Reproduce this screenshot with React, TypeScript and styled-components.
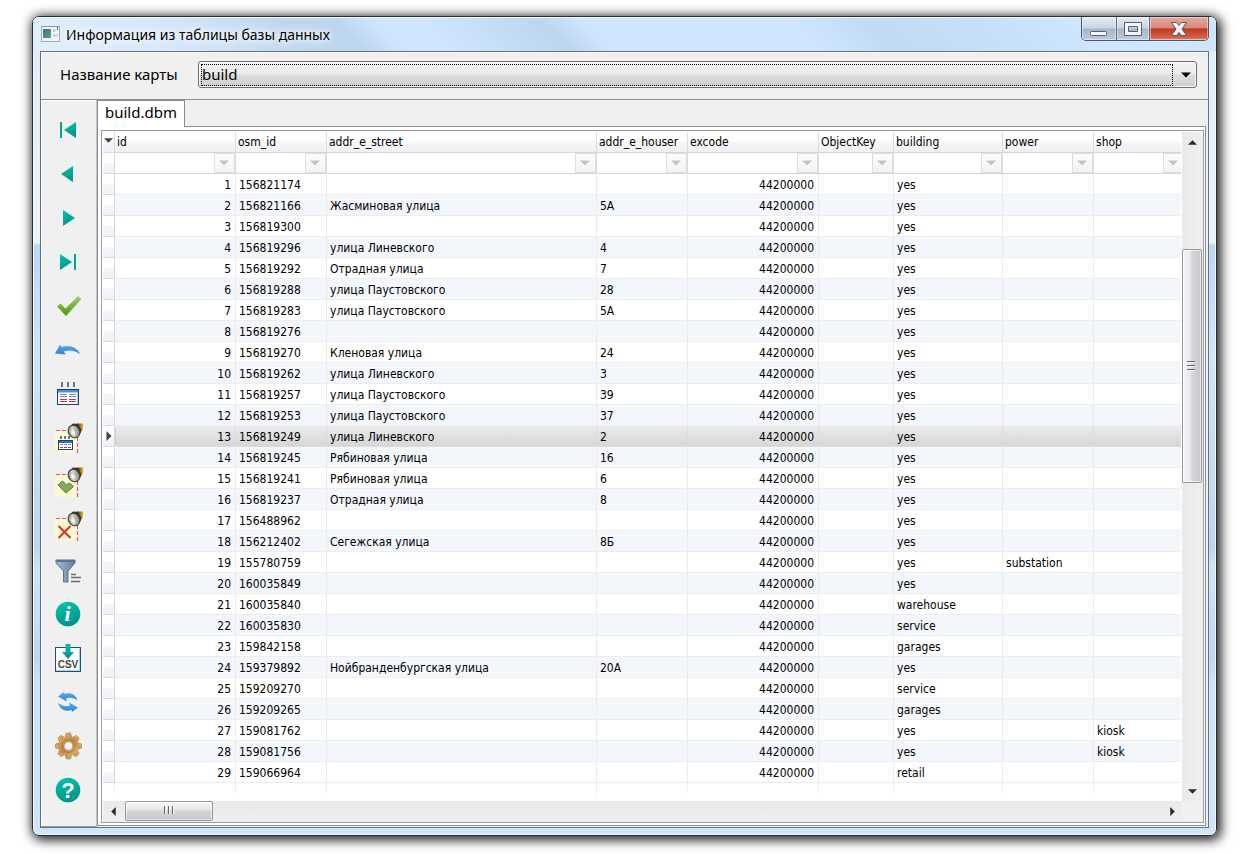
import React from 'react';
import styled, { createGlobalStyle, css } from 'styled-components';

const tableFont = "'DejaVu Sans Condensed', Tahoma, 'DejaVu Sans', sans-serif";
const uiFont = "'Noto Sans', 'Segoe UI', sans-serif";

const GlobalStyle = createGlobalStyle`
  *, *::before, *::after { box-sizing: border-box; }
  body { margin: 0; background: #fff; color: #000; font-family: ${uiFont}; }
  button { margin: 0; padding: 0; border: 0; background: none; font: inherit; color: inherit; cursor: default; }
`;

const Desktop = styled.div`
  min-height: 100vh;
  padding: 16px 32px 18px;
  display: flex;
`;

const Window = styled.main`
  flex: 1;
  min-width: 0;
  display: flex;
  flex-direction: column;
  padding: 0 7px 7px;
  border: 1px solid #252e38;
  border-radius: 7px;
  background: linear-gradient(
    to bottom,
    #dcecfc 0, #eaf4fd 226px, #bcd8f4 228px, #cfe5fe 340px,
    #bdd5ee 530px, #cde4fd 550px, #bfd8f2 640px, #cce4fd 670px, #cfe5fe 100%
  );
  box-shadow: inset 0 0 0 1px #f4faff, 3px 3px 12px 1px rgba(0, 0, 0, 0.75), 0 0 12px rgba(0, 0, 0, 0.5);
`;

const TitleBar = styled.header`
  height: 34px;
  margin: 0 -7px;
  padding: 0 7px;
  display: flex;
  align-items: flex-start;
  border-radius: 6px 6px 0 0;
  box-shadow: inset 0 1px 0 #f4faff;
  background: linear-gradient(
    45deg,
    #e2f0fd 0, #d3e6fa 120px, #bfd6ef 195px, #bdd5ee 235px, #cfe5fe 262px,
    #cfe5fe 300px, #bdd5ee 380px, #cfe5fe 408px, #cfe5fe 560px,
    #c1dbf5 610px, #c6e0f9 690px, #cde6fe 750px, #cfe5fe 100%
  );
`;

const Caption = styled.h1`
  flex: 1;
  min-width: 0;
  margin: 0;
  height: 34px;
  display: flex;
  align-items: center;
  gap: 5px;
  padding-left: 1px;
  font-size: 14px;
  font-weight: 400;
  white-space: nowrap;
  text-shadow: 0 0 6px #fff, 0 0 10px #fff, 0 0 14px #fff;
`;

const WindowButtons = styled.div`
  display: flex;
  height: 24px;
  border: 1px solid #4c5868;
  border-top: 0;
  border-radius: 0 0 5px 5px;
  overflow: hidden;
`;

const WindowButton = styled.button<{ $width: number; $close?: boolean }>`
  width: ${(p) => p.$width}px;
  display: flex;
  align-items: center;
  justify-content: center;
  box-shadow: inset 0 0 0 1px rgba(255, 255, 255, 0.45);
  background: linear-gradient(#e4ebf2, #c9d5e3 48%, #a4b6cb 52%, #bccbe2);
  & + & { border-left: 1px solid #5d6a7c; }
  ${(p) => p.$close && css`
    background: linear-gradient(#e6a79c, #d98a7c 46%, #bd3a22 52%, #d8624a 90%, #e09080);
  `}
`;

const Client = styled.div`
  flex: 1;
  display: flex;
  flex-direction: column;
  border: 1px solid #69717e;
  background: #f0f0f0;
  box-shadow: inset 1px 1px 0 #fff;
`;

const MapPanel = styled.div`
  display: flex;
  align-items: center;
  height: 48px;
  padding: 0 11px 2px 19px;
  border-bottom: 1px solid #8e8e8e;
  font-size: 15px;
`;

const MapLabel = styled.label`
  width: 138px;
  flex: none;
  padding-bottom: 2px;
`;

const Combo = styled.div`
  flex: 1;
  height: 27px;
  display: flex;
  align-items: center;
  padding: 2px;
  border: 1px solid #707070;
  border-radius: 3px;
  background: linear-gradient(#f2f2f2, #ebebeb 49%, #dddddd 51%, #cfcfcf);
  box-shadow: inset 0 0 0 1px #f8f8f8;
`;

const ComboSelect = styled.select`
  appearance: none;
  flex: 1;
  min-width: 0;
  height: 22px;
  margin: 0;
  padding: 0 0 2px;
  border: 1px dotted #000;
  border-radius: 0;
  outline: 0;
  background: transparent;
  color: #000;
  font: 15px/18px ${uiFont};
`;

const ComboArrow = styled.span`
  width: 21px;
  display: flex;
  justify-content: center;
  padding-left: 5px;
`;

const Body = styled.div`
  flex: 1;
  display: flex;
  min-height: 0;
`;

const Sidebar = styled.nav`
  width: 56px;
  flex: none;
  padding: 8px 2px 0 0;
  display: flex;
  flex-direction: column;
  align-items: center;
  border-right: 1px solid #c4c4c8;
  border-bottom: 1px solid #9a9a9a;
  box-shadow: inset 1px 1px 0 #fff;
`;

const ToolButton = styled.button`
  width: 44px;
  height: 44px;
  display: flex;
  align-items: center;
  justify-content: center;
  svg { display: block; }
`;

const Main = styled.section`
  flex: 1;
  min-width: 0;
  display: flex;
  flex-direction: column;
  padding: 0 2px 1px 0;
`;

const TabStrip = styled.div`
  height: 26px;
  display: flex;
`;

const Tab = styled.button`
  height: 27px;
  padding: 0 7px 4px;
  border: 1px solid #8b8b95;
  border-bottom: 0;
  background: #fff;
  font-size: 15px;
  line-height: 22px;
  z-index: 1;
`;

const TabPage = styled.div`
  flex: 1;
  display: flex;
  padding: 3px 1px 2px 3px;
  border: 1px solid #8b8b95;
  background: #fff;
`;

const GridFrame = styled.div`
  flex: 1;
  min-width: 0;
  display: grid;
  grid-template-columns: minmax(0, 1fr) 21px;
  grid-template-rows: 1fr 21px;
  padding: 1px 0 0 1px;
  border: 1px solid #9a9aa2;
  background: #fff;
`;

const Viewport = styled.div`
  display: flex;
  flex-direction: column;
  overflow: hidden;
  margin-right: 1px;
`;

const DataTable = styled.table`
  width: 1082px;
  table-layout: fixed;
  border-collapse: separate;
  border-spacing: 0;
  font: 12px/18px ${tableFont};
`;

const headFill = 'linear-gradient(#ffffff 0, #ffffff 45%, #f6f7f9 50%, #eef0f3 100%)';

const HeadCell = styled.th`
  height: 21px;
  padding: 0 0 0 2px;
  overflow: hidden;
  text-align: left;
  font-weight: 400;
  white-space: nowrap;
  border-right: 1px solid #dcdcdc;
  border-bottom: 1px solid #d6d6d8;
  background: ${headFill};
`;

const MarkerCell = styled.th`
  height: 21px;
  padding: 0;
  border-right: 1px solid #d8d8da;
  border-bottom: 1px solid #dadadc;
  background: ${headFill};
  svg { display: block; margin: 0 auto; }
  thead & { padding-bottom: 4px; }
`;

const FilterCell = styled.td`
  height: 21px;
  padding: 0;
  border-right: 1px solid #dcdcdc;
  border-bottom: 1px solid #d6d6d8;
`;

const FilterBox = styled.div`
  height: 20px;
  display: flex;
`;

const FilterInput = styled.input`
  flex: 1;
  min-width: 0;
  margin: 0;
  padding: 0 2px;
  border: 0;
  outline: 0;
  background: transparent;
  font: 12px/18px ${tableFont};
`;

const FilterButton = styled.button`
  width: 21px;
  display: flex;
  align-items: center;
  justify-content: center;
  padding-right: 1px;
  border: 1px solid #dedede;
  background: linear-gradient(#fdfdfd, #f3f3f3);
`;

const Row = styled.tr<{ $even: boolean; $current: boolean }>`
  background: ${(p) => (p.$even ? '#f3f7fc' : '#ffffff')};
  ${(p) => p.$current && css`
    td { background: linear-gradient(#ececec, #d6d6d6); border-color: #dcdcdc; }
    td:nth-child(2) { border-left: 1px solid #cfcfcf; border-radius: 3px 0 0 3px; }
  `}
`;

const Cell = styled.td<{ $right?: boolean }>`
  height: 21px;
  padding: 2px 4px 0 3px;
  overflow: hidden;
  white-space: nowrap;
  text-align: ${(p) => (p.$right ? 'right' : 'left')};
  border-right: 1px solid #ebebeb;
  border-bottom: 1px solid #ededed;
`;

const FadeCell = styled.td`
  height: 15px;
  padding: 0;
  background: linear-gradient(#e6e6e6, #ffffff) right / 1px 100% no-repeat;
`;

const VBar = styled.div`
  display: flex;
  flex-direction: column;
  background: linear-gradient(to right, #e9e9e9, #f0f0f0);
`;

const HBar = styled.div`
  display: flex;
  background: linear-gradient(#e9e9e9, #f0f0f0);
`;

const ArrowButton = styled.button`
  width: 20px;
  height: 20px;
  flex: none;
  display: flex;
  align-items: center;
  justify-content: center;
`;

const VThumb = styled.div`
  flex: 231 1 0;
  width: 20px;
  display: flex;
  align-items: center;
  justify-content: center;
  padding: 0 2px 2px 0;
  border: 1px solid #979797;
  border-radius: 2px;
  background: linear-gradient(to right, #f5f5f5, #e9e9eb 40%, #d9dadc 45%, #c4c5c9);
  box-shadow: inset 0 0 0 1px rgba(255, 255, 255, 0.6);
`;

const HThumb = styled.div`
  flex: 86 1 0;
  height: 20px;
  display: flex;
  align-items: center;
  justify-content: center;
  padding-bottom: 2px;
  border: 1px solid #979797;
  border-radius: 2px;
  background: linear-gradient(#f5f5f5, #e9e9eb 40%, #d9dadc 45%, #c4c5c9);
  box-shadow: inset 0 0 0 1px rgba(255, 255, 255, 0.6);
`;

const Gap = styled.span<{ $grow: number }>`
  flex: ${(p) => p.$grow} 1 0;
`;

const Corner = styled.div`
  background: #f0f0f0;
`;

type Dir = 'up' | 'down' | 'left' | 'right';
const arrowPoints: Record<Dir, string> = {
  up: '0,6 4,2 8,6',
  down: '0,2 8,2 4,6',
  left: '6,0 6,8 2,4',
  right: '2,0 2,8 6,4',
};

const Arrow = ({ dir, color = '#2a2a2a', size = 9 }: { dir: Dir; color?: string; size?: number }) => (
  <svg width={size} height={size} viewBox="0 0 8 8" aria-hidden="true">
    <polygon points={arrowPoints[dir]} fill={color} />
  </svg>
);

const Icon = ({ children }: { children: React.ReactNode }) => (
  <svg width="32" height="32" viewBox="-2 -2 32 32" aria-hidden="true">{children}</svg>
);

const HiddenSvg = styled.svg`
  position: absolute;
`;

const Defs = () => (
  <HiddenSvg width="0" height="0" aria-hidden="true">
    <defs>
      <linearGradient id="teal" x1="0" y1="0" x2="0.3" y2="1">
        <stop offset="0" stopColor="#06c4ad" /><stop offset="1" stopColor="#00968b" />
      </linearGradient>
      <linearGradient id="green" x1="0" y1="0" x2="0" y2="1">
        <stop offset="0" stopColor="#a9cf7a" /><stop offset="1" stopColor="#4c9400" />
      </linearGradient>
      <linearGradient id="blue" x1="0" y1="0" x2="0" y2="1">
        <stop offset="0" stopColor="#5aaef0" /><stop offset="1" stopColor="#2f7fd8" />
      </linearGradient>
      <linearGradient id="steel" x1="0" y1="0" x2="1" y2="0">
        <stop offset="0" stopColor="#a9bad2" /><stop offset="1" stopColor="#647ba0" />
      </linearGradient>
      <linearGradient id="gold" x1="0" y1="0" x2="1" y2="1">
        <stop offset="0" stopColor="#e9bd7c" /><stop offset="1" stopColor="#b87f3c" />
      </linearGradient>
      <linearGradient id="goldRing" gradientUnits="userSpaceOnUse" x1="6" y1="5" x2="23" y2="23">
        <stop offset="0" stopColor="#d9a661" /><stop offset="0.5" stopColor="#c08a46" /><stop offset="1" stopColor="#e0b070" />
      </linearGradient>
      <linearGradient id="torch" x1="0" y1="0" x2="1" y2="0">
        <stop offset="0" stopColor="#4a4a48" /><stop offset="0.4" stopColor="#3a3226" /><stop offset="1" stopColor="#f5b020" />
      </linearGradient>
      <linearGradient id="lens" x1="0" y1="0" x2="1" y2="0.6">
        <stop offset="0" stopColor="#77776f" /><stop offset="0.5" stopColor="#d8d8d2" /><stop offset="1" stopColor="#8a8a84" />
      </linearGradient>
      <linearGradient id="screen" x1="0" y1="0" x2="1" y2="1">
        <stop offset="0" stopColor="#3d6aa8" /><stop offset="1" stopColor="#5cab74" />
      </linearGradient>
    </defs>
  </HiddenSvg>
);

const SearchSheet = ({ children }: { children: React.ReactNode }) => (
  <Icon>
    <rect x="1" y="6" width="22" height="23" fill="#fbf9cf" />
    <path d="M2 6.500H15M23.500 13V29" stroke="#dc5580" strokeWidth="1.200" strokeDasharray="4 2" fill="none" />
    {children}
    <path d="M23 -0.500H29V5L26 10L19 1Z" fill="url(#torch)" />
    <path d="M15 3L19 -0.500L24 0L27.500 6L25 12Z" fill="#333331" />
    <ellipse cx="20" cy="7.500" rx="5.500" ry="6.500" transform="rotate(-35 20 7.5)" fill="url(#lens)" stroke="#454541" strokeWidth="1.200" />
    <ellipse cx="19" cy="8.500" rx="2" ry="2.500" transform="rotate(-35 19 8.5)" fill="#f0f0ea" />
  </Icon>
);

const gearTeeth = [0, 45, 90, 135, 180, 225, 270, 315];

const tools: { label: string; icon: React.ReactNode }[] = [
  { label: 'Первая запись', icon: <Icon><rect x="6" y="6" width="2" height="16" fill="#00a596" /><polygon points="22,6 22,22 10,14" fill="url(#teal)" /></Icon> },
  { label: 'Предыдущая запись', icon: <Icon><polygon points="19,6 19,22 7,14" fill="url(#teal)" /></Icon> },
  { label: 'Следующая запись', icon: <Icon><polygon points="9,6 9,22 21,14" fill="url(#teal)" /></Icon> },
  { label: 'Последняя запись', icon: <Icon><polygon points="6,6 6,22 18,14" fill="url(#teal)" /><rect x="20" y="6" width="2" height="16" fill="#00a596" /></Icon> },
  { label: 'Применить', icon: <Icon><path d="M3 14.500L6.500 11.500L11.500 16.500L24 4L27.500 7L12 24Z" fill="url(#green)" /></Icon> },
  { label: 'Отменить', icon: <Icon><path d="M1 17.500L6 8.500L7.500 11C15 8.500 23 11 26 18C20.500 14.500 15 13.800 10 15.500L11.500 18.500Z" fill="url(#blue)" /></Icon> },
  {
    label: 'Таблица',
    icon: (
      <Icon>
        <path d="M8 2V7M14 2V7M20 2V7" stroke="#66769a" strokeWidth="2" />
        <rect x="3.500" y="9.500" width="21" height="15" fill="#fff" stroke="#1d3f77" />
        <rect x="4" y="10" width="20" height="2.500" fill="#4a90e2" />
        <path d="M23.500 12V24" stroke="#9fd4f5" />
        <path d="M6 14.500H13M15 14.500H22M6 16.500H13M15 16.500H22" stroke="#7b88a6" />
        <path d="M6 19.500H13M15 19.500H22M6 21.500H13M15 21.500H22" stroke="#d8244c" />
      </Icon>
    ),
  },
  {
    label: 'Поиск в таблице',
    icon: (
      <SearchSheet>
        <path d="M7 12V15M11 12V15M15 12V15" stroke="#66769a" strokeWidth="2" />
        <rect x="4.500" y="16.500" width="14" height="9" fill="#fff" stroke="#1d3f77" />
        <rect x="5" y="17" width="13" height="2" fill="#2f6fc4" />
        <path d="M6 20.500H17" stroke="#7b88a6" strokeDasharray="3 1" />
        <path d="M6 23.500H17" stroke="#d8244c" strokeDasharray="3 1" />
      </SearchSheet>
    ),
  },
  { label: 'Поиск объекта', icon: <SearchSheet><path d="M4 17L8.500 13L12.500 17L15.500 15L19.500 18.500L12 25Z" fill="#86ab5c" stroke="#56803a" /></SearchSheet> },
  { label: 'Сбросить выделение', icon: <SearchSheet><path d="M4.500 14L16.500 26M16.500 14L4.500 26" stroke="#d92b2b" strokeWidth="2" /></SearchSheet> },
  {
    label: 'Фильтр',
    icon: (
      <Icon>
        <path d="M2 4H21V7L14 15V26H9.500V15L2 7Z" fill="url(#steel)" stroke="#5b7196" />
        <path d="M2.500 5H20.500" stroke="#5b7196" strokeWidth="2" />
        <path d="M17 18.500H22M17 21.500H27M17 25.500H26" stroke="#6c6c6c" strokeWidth="1.500" />
      </Icon>
    ),
  },
  {
    label: 'Информация',
    icon: (
      <Icon>
        <circle cx="14" cy="14" r="12.300" fill="url(#teal)" />
        <text x="13.500" y="21" textAnchor="middle" fill="#fff" fontFamily="'Liberation Serif', serif" fontStyle="italic" fontWeight="700" fontSize="22">i</text>
      </Icon>
    ),
  },
  {
    label: 'Экспорт в CSV',
    icon: (
      <Icon>
        <rect x="1.500" y="3.500" width="25" height="24" fill="#fff" stroke="#2b4a7c" />
        <path d="M25.500 4.500V26.500H2" stroke="#8fdcf0" fill="none" />
        <path d="M11.500 0H16.500V8H20L14 15L8 8H11.500Z" fill="url(#teal)" />
        <text x="14" y="24" textAnchor="middle" fill="#444" fontFamily="'Liberation Sans', sans-serif" fontWeight="700" fontSize="10">CSV</text>
      </Icon>
    ),
  },
  {
    label: 'Обновить',
    icon: (
      <Icon>
        <path d="M4 8.500L10 4L10.500 6C17 4 21.500 6.500 23.500 12.500C20 10 16 9 12 10.500L13 13.500Z" fill="url(#blue)" />
        <path d="M24 19.500L18 24L17.500 22C11 24 6 21.500 4 15C8 18 12 19 16 17.500L15 14.500Z" fill="url(#blue)" />
      </Icon>
    ),
  },
  {
    label: 'Настройки',
    icon: (
      <Icon>
        {gearTeeth.map((a) => (
          <path key={a} d="M11 6L12.500 1H16.500L18 6Z" transform={`rotate(${a} 14.5 14)`} fill="url(#gold)" stroke="#a97435" strokeWidth="0.600" />
        ))}
        <circle cx="14.500" cy="14" r="7.200" fill="none" stroke="url(#goldRing)" strokeWidth="5.500" />
        <circle cx="14.500" cy="14" r="6.500" fill="none" stroke="#a87236" strokeWidth="0.800" />
        <circle cx="14.500" cy="14" r="4.500" fill="#f4f4f4" stroke="#a97435" strokeWidth="0.800" />
      </Icon>
    ),
  },
  {
    label: 'Справка',
    icon: (
      <Icon>
        <circle cx="14" cy="14" r="12.300" fill="url(#teal)" />
        <text x="14" y="22" textAnchor="middle" fill="#fff" fontFamily="'Liberation Sans', sans-serif" fontWeight="700" fontSize="22">?</text>
      </Icon>
    ),
  },
];

const columns = [
  { name: 'id', width: 121 },
  { name: 'osm_id', width: 91 },
  { name: 'addr_e_street', width: 270 },
  { name: 'addr_e_houser', width: 91 },
  { name: 'excode', width: 131 },
  { name: 'ObjectKey', width: 75 },
  { name: 'building', width: 109 },
  { name: 'power', width: 91 },
  { name: 'shop', width: 91 },
];

type Rec = [osm: string, street?: string, house?: string, building?: string, power?: string, shop?: string];
const records: Rec[] = [
  ['156821174'],
  ['156821166', 'Жасминовая улица', '5А'],
  ['156819300'],
  ['156819296', 'улица Линевского', '4'],
  ['156819292', 'Отрадная улица', '7'],
  ['156819288', 'улица Паустовского', '28'],
  ['156819283', 'улица Паустовского', '5А'],
  ['156819276'],
  ['156819270', 'Кленовая улица', '24'],
  ['156819262', 'улица Линевского', '3'],
  ['156819257', 'улица Паустовского', '39'],
  ['156819253', 'улица Паустовского', '37'],
  ['156819249', 'улица Линевского', '2'],
  ['156819245', 'Рябиновая улица', '16'],
  ['156819241', 'Рябиновая улица', '6'],
  ['156819237', 'Отрадная улица', '8'],
  ['156488962'],
  ['156212402', 'Сегежская улица', '8Б'],
  ['155780759', '', '', 'yes', 'substation'],
  ['160035849'],
  ['160035840', '', '', 'warehouse'],
  ['160035830', '', '', 'service'],
  ['159842158', '', '', 'garages'],
  ['159379892', 'Нойбранденбургская улица', '20А'],
  ['159209270', '', '', 'service'],
  ['159209265', '', '', 'garages'],
  ['159081762', '', '', 'yes', '', 'kiosk'],
  ['159081756', '', '', 'yes', '', 'kiosk'],
  ['159066964', '', '', 'retail'],
];
const currentRecord = 13;

export default function App() {
  return (
    <Desktop>
      <GlobalStyle />
      <Defs />
      <Window>
        <TitleBar>
          <Caption>
            <svg width="20" height="18" viewBox="0 0 20 18" aria-hidden="true">
              <rect x="0.500" y="1.500" width="18" height="15" fill="#f4f6f8" stroke="#a3acb6" />
              <path d="M1 1.500H19" stroke="#8792a0" />
              <rect x="2" y="4" width="8" height="9" fill="url(#screen)" />
              <path d="M12 4H14.500V7H12ZM12 9H14.500V12H12ZM15.500 9H17V12H15.500Z" fill="#c9ced4" />
              <path d="M16.500 2V5" stroke="#2f6db0" />
            </svg>
            Информация из таблицы базы данных
          </Caption>
          <WindowButtons>
            <WindowButton $width={34} aria-label="Свернуть">
              <svg width="18" height="16" viewBox="0 0 18 16"><rect x="0.500" y="10.500" width="16" height="4" rx="1" fill="#f8f8f8" stroke="#555f70" /></svg>
            </WindowButton>
            <WindowButton $width={33} aria-label="Развернуть">
              <svg width="18" height="14" viewBox="0 0 18 14">
                <path fillRule="evenodd" d="M0.500 0.500H17.500V13.500H0.500ZM4.500 4.500V9.500H13.500V4.500Z" fill="#f4f5f7" stroke="#555f70" />
              </svg>
            </WindowButton>
            <WindowButton $width={59} $close aria-label="Закрыть">
              <svg width="16" height="14" viewBox="0 0 16 14">
                <path d="M0.500 0.500H5.500L8 3.500L10.500 0.500H15.500L11 7L15.500 13.500H10.500L8 10.500L5.500 13.500H0.500L5 7Z" fill="#f6f6f8" stroke="#5a5566" />
              </svg>
            </WindowButton>
          </WindowButtons>
        </TitleBar>

        <Client>
          <MapPanel>
            <MapLabel htmlFor="map-name">Название карты</MapLabel>
            <Combo>
              <ComboSelect id="map-name" defaultValue="build">
                <option value="build">build</option>
              </ComboSelect>
              <ComboArrow><Arrow dir="down" color="#000" size={10} /></ComboArrow>
            </Combo>
          </MapPanel>

          <Body>
            <Sidebar aria-label="Инструменты">
              {tools.map((t) => (
                <ToolButton key={t.label} aria-label={t.label}>{t.icon}</ToolButton>
              ))}
            </Sidebar>

            <Main>
              <TabStrip role="tablist">
                <Tab role="tab" aria-selected="true">build.dbm</Tab>
              </TabStrip>
              <TabPage role="tabpanel">
                <GridFrame>
                  <Viewport>
                    <DataTable>
                      <colgroup>
                        <col width={12} />
                        {columns.map((c) => <col key={c.name} width={c.width} />)}
                      </colgroup>
                      <thead>
                        <tr>
                          <MarkerCell><Arrow dir="down" color="#444" /></MarkerCell>
                          {columns.map((c) => <HeadCell key={c.name} scope="col">{c.name}</HeadCell>)}
                        </tr>
                        <tr>
                          <MarkerCell />
                          {columns.map((c) => (
                            <FilterCell key={c.name}>
                              <FilterBox>
                                <FilterInput aria-label={`Фильтр ${c.name}`} />
                                <FilterButton aria-label={`Условия ${c.name}`}><Arrow dir="down" color="#c4c4c4" size={10} /></FilterButton>
                              </FilterBox>
                            </FilterCell>
                          ))}
                        </tr>
                      </thead>
                      <tbody>
                        {records.map(([osm, street, house, building = 'yes', power, shop], i) => (
                          <Row key={osm} $even={i % 2 === 1} $current={i + 1 === currentRecord}>
                            <MarkerCell>{i + 1 === currentRecord && <Arrow dir="right" color="#444" size={10} />}</MarkerCell>
                            <Cell $right>{i + 1}</Cell>
                            <Cell>{osm}</Cell>
                            <Cell>{street}</Cell>
                            <Cell>{house}</Cell>
                            <Cell $right>44200000</Cell>
                            <Cell />
                            <Cell>{building}</Cell>
                            <Cell>{power}</Cell>
                            <Cell>{shop}</Cell>
                          </Row>
                        ))}
                        <tr aria-hidden="true">
                          <FadeCell />
                          {columns.map((c) => <FadeCell key={c.name} />)}
                        </tr>
                      </tbody>
                    </DataTable>
                  </Viewport>
                  <VBar>
                    <ArrowButton aria-label="Вверх"><Arrow dir="up" /></ArrowButton>
                    <Gap $grow={98} />
                    <VThumb>
                      <svg width="10" height="11" viewBox="0 0 10 11" aria-hidden="true">
                        <path d="M1 1.500H9M1 5.500H9M1 9.500H9" stroke="#63636a" />
                        <path d="M1 2.500H9M1 6.500H9M1 10.500H9" stroke="#f6f6f6" />
                      </svg>
                    </VThumb>
                    <Gap $grow={300} />
                    <ArrowButton aria-label="Вниз"><Arrow dir="down" /></ArrowButton>
                  </VBar>
                  <HBar>
                    <ArrowButton aria-label="Влево"><Arrow dir="left" /></ArrowButton>
                    <Gap $grow={2} />
                    <HThumb>
                      <svg width="11" height="10" viewBox="0 0 11 10" aria-hidden="true">
                        <path d="M1.500 1V9M5.500 1V9M9.500 1V9" stroke="#63636a" />
                        <path d="M2.500 1V9M6.500 1V9M10.500 1V9" stroke="#f6f6f6" />
                      </svg>
                    </HThumb>
                    <Gap $grow={951} />
                    <ArrowButton aria-label="Вправо"><Arrow dir="right" /></ArrowButton>
                  </HBar>
                  <Corner />
                </GridFrame>
              </TabPage>
            </Main>
          </Body>
        </Client>
      </Window>
    </Desktop>
  );
}
